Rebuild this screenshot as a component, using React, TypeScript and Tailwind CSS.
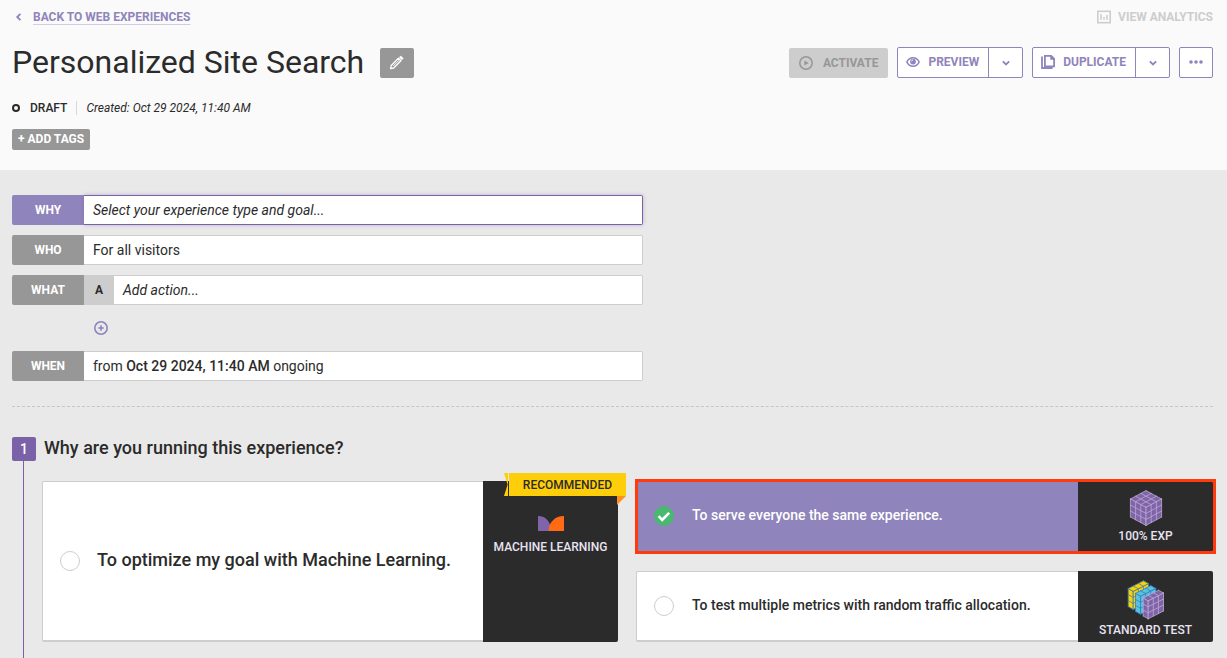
import type { ReactNode } from "react";

const linkText = "text-xs leading-4 font-bold";

function ChevronDown() {
  return (
    <svg className="size-2" viewBox="0 0 8 8" fill="none" stroke="currentColor" strokeWidth="1.8" aria-hidden="true">
      <path d="M0.8 2.4 4 5.5 7.2 2.4" />
    </svg>
  );
}

function Pencil() {
  return (
    <svg className="size-4" viewBox="0 0 16 16" fill="none" stroke="currentColor" strokeWidth="1.3" strokeLinejoin="round" aria-hidden="true">
      <path d="M1.6 13.6 2.2 10.5 9.4 3.3 11.9 5.8 4.7 13Z" />
      <path d="M4.2 11 10 5.2" strokeWidth="0.9" />
      <path d="M10.4 2.3 11.8 0.9 14.3 3.4 12.9 4.8Z" fill="currentColor" strokeWidth="0.6" />
    </svg>
  );
}

function Eye() {
  return (
    <svg className="h-4 w-[14px]" viewBox="0 0 14 16" fill="none" stroke="currentColor" strokeWidth="1.6" aria-hidden="true">
      <path d="M0.9 8C2.2 5 4.4 3.8 7 3.8S11.8 5 13.1 8C11.8 11 9.6 12.2 7 12.2S2.2 11 0.9 8Z" />
      <circle cx="7" cy="7.6" r="2.9" fill="currentColor" stroke="none" />
      <path d="M5.6 7.4A1.5 1.5 0 0 1 7 5.9" stroke="#fff" strokeWidth="0.9" />
    </svg>
  );
}

function Pages() {
  return (
    <svg className="size-[14px]" viewBox="0 0 14 14" fill="none" stroke="currentColor" aria-hidden="true">
      <path d="M3.9 0.9H10.2L13.1 3.8V11.4H3.9Z" strokeWidth="1.8" />
      <path d="M9.6 1V4.4H13V3.8L10.2 1Z" fill="currentColor" strokeWidth="0.6" />
      <path d="M1 1.6V13H11.6" strokeWidth="1.8" />
    </svg>
  );
}

function PlayCircle() {
  return (
    <svg className="size-[14px]" viewBox="0 0 14 14" aria-hidden="true">
      <circle cx="7" cy="7" r="6.2" fill="none" stroke="currentColor" strokeWidth="1.5" />
      <path d="M5.3 4.5V9.5L9.8 7Z" fill="currentColor" />
    </svg>
  );
}

function Analytics() {
  return (
    <svg className="size-[14px]" viewBox="0 0 14 14" fill="none" stroke="currentColor" aria-hidden="true">
      <rect x="0.8" y="1.3" width="12.4" height="11.4" strokeWidth="1.6" />
      <path d="M4 4V9.8M7 7V9.8M10 5V9.8" strokeWidth="1.5" />
    </svg>
  );
}

function SplitButton({ icon, label }: { icon: ReactNode; label: string }) {
  return (
    <div className="flex h-[31px] rounded-xs border border-[#8f84bb] bg-white text-[#8f84bb]">
      <button type="button" className={`flex items-center gap-2 border-r border-[#8f84bb] pr-[9px] pb-0.5 pl-2 ${linkText}`}>
        {icon}
        {label}
      </button>
      <button type="button" aria-label={`${label} options`} className="flex w-[33px] items-center justify-center">
        <ChevronDown />
      </button>
    </div>
  );
}

function SummaryRow({ name, active, slot, children }: { name: string; active?: boolean; slot?: string; children: ReactNode }) {
  return (
    <button type="button" className="flex h-[30px] w-full text-left">
      <span
        className={`flex w-18 items-center justify-center self-stretch rounded-l-xs text-xs font-bold text-white ${active ? "bg-[#8f84bb]" : "bg-[#979797]"}`}
      >
        {name}
      </span>
      {slot && <span className="flex w-[30px] items-center justify-center self-stretch bg-[#cdcdcd] text-xs font-bold">{slot}</span>}
      <span
        className={`flex flex-1 items-center self-stretch rounded-r-xs border border-l-0 bg-white px-[9px] text-sm ${active ? "border-[#7b62a8] shadow-[0_0_4px_#7b62a866]" : "border-[#cdcdcd]"}`}
      >
        <span>{children}</span>
      </span>
    </button>
  );
}

type Point = [number, number];

function Face({ origin, u, v, cols, rows, fill, line }: { origin: Point; u: Point; v: Point; cols: number; rows: number; fill: string; line: string }) {
  const at = (a: number, b: number) => `${origin[0] + u[0] * a + v[0] * b} ${origin[1] + u[1] * a + v[1] * b}`;
  let grid = "";
  for (let i = 0; i <= cols; i++) grid += `M${at(i, 0)}L${at(i, rows)}`;
  for (let j = 0; j <= rows; j++) grid += `M${at(0, j)}L${at(cols, j)}`;
  return (
    <>
      <path d={`M${at(0, 0)}L${at(cols, 0)}L${at(cols, rows)}L${at(0, rows)}Z`} fill={fill} />
      <path d={grid} stroke={line} strokeWidth="0.8" strokeLinecap="round" fill="none" />
    </>
  );
}

function Cube() {
  const tone = { fill: "#8064a9", line: "#b9a9d0" };
  return (
    <svg className="h-9 w-[34px]" viewBox="0 0 34 36" aria-hidden="true">
      <Face origin={[17, 0.6]} u={[5.2, 2.8]} v={[-5.2, 2.8]} cols={3} rows={3} {...tone} />
      <Face origin={[1.4, 9]} u={[5.2, 2.8]} v={[0, 6]} cols={3} rows={3} {...tone} />
      <Face origin={[17, 17.4]} u={[5.2, -2.8]} v={[0, 6]} cols={3} rows={3} {...tone} />
    </svg>
  );
}

function Slab({ x, y, fill, line }: { x: number; y: number; fill: string; line: string }) {
  return (
    <>
      <Face origin={[x, y]} u={[5, 2.8]} v={[0, 6]} cols={1} rows={3} fill={fill} line={line} />
      <Face origin={[x + 5, y + 2.8]} u={[5.1, -2.6]} v={[0, 6]} cols={3} rows={3} fill={fill} line={line} />
      <Face origin={[x, y]} u={[5.1, -2.6]} v={[5, 2.8]} cols={3} rows={1} fill={fill} line={line} />
    </>
  );
}

function SlicedCube() {
  return (
    <svg className="h-10 w-[38px]" viewBox="0 0 38 40" aria-hidden="true">
      <Slab x={1.2} y={8.6} fill="#ffce0a" line="#3c86a0" />
      <Slab x={8.5} y={13.4} fill="#5cc0dc" line="#2b83cb" />
      <Slab x={16.2} y={18} fill="#8064a9" line="#b9a9d0" />
    </svg>
  );
}

function MachineMark() {
  return (
    <svg className="h-[15px] w-[26px]" viewBox="0 0 26 15" aria-hidden="true">
      <path d="M0 0C8 0 13 6 13 15H0Z" fill="#8064a9" />
      <path d="M26 0V15H10.5C11 6 17 0 26 0Z" fill="#ff6b15" />
    </svg>
  );
}

function Ribbon() {
  return (
    <div className="absolute -top-2 -right-2 flex">
      <svg className="h-[23px] w-[5px]" viewBox="0 0 5 23" aria-hidden="true">
        <path d="M0 0H4V23H0L3.6 11.5Z" fill="#ffce0a" />
      </svg>
      <span className="flex h-[23px] items-center bg-[#ffce0a] px-[14px] text-xs font-medium text-[#2b2b2b]">RECOMMENDED</span>
      <svg className="absolute top-full right-0 size-[9px]" viewBox="0 0 9 9" aria-hidden="true">
        <path d="M0 0H9L0 9Z" fill="#ff9124" />
      </svg>
    </div>
  );
}

function Option({
  text,
  caption,
  art,
  checked,
  large,
}: {
  text: string;
  caption: string;
  art: ReactNode;
  checked?: boolean;
  large?: boolean;
}) {
  return (
    <label className={`relative flex rounded-xs ${large ? "row-span-2" : ""}`}>
      <span
        className={`flex flex-1 items-center rounded-l-xs border border-r-0 border-b-2 pl-[17px] ${checked ? "border-[#8f84bb] bg-[#8f84bb] text-white" : "border-[#cdcdcd] bg-white"}`}
      >
        <span className="relative flex size-5">
          <input
            type="radio"
            name="purpose"
            defaultChecked={checked}
            className="size-5 appearance-none rounded-full border border-[#cdcdcd] bg-white checked:border-[#49b971] checked:bg-[#49b971]"
          />
          {checked && (
            <svg className="absolute inset-0 size-5" viewBox="0 0 20 20" fill="none" stroke="#fff" strokeWidth="2.6" aria-hidden="true">
              <path d="M4.6 10.2 8.2 13.8 15.2 6.9" />
            </svg>
          )}
        </span>
        <span className={`pb-0.5 font-medium ${large ? "pl-[17px] text-lg" : "pl-[18px] text-sm"}`}>{text}</span>
      </span>
      <span
        className={`flex w-[135px] flex-col items-center rounded-r-xs bg-[#2b2b2b] text-xs leading-4 font-medium text-[#e9e4f2] ${large ? "gap-2 pt-[35px]" : "gap-0.5 pt-[9px]"}`}
      >
        {art}
        {caption}
      </span>
      {large && <Ribbon />}
      {checked && <span className="absolute -inset-y-[2px] -right-[3px] -left-px border-3 border-[#ff3a0c]" />}
    </label>
  );
}

export default function App() {
  return (
    <div className="flex min-h-screen flex-col bg-[#e9e9e9] font-['Roboto',sans-serif] text-[#2b2b2b]">
      <header className="bg-[#fafafa] pt-2 pr-[14px] pb-5 pl-3">
        <div className="flex h-[17px] items-center justify-between">
          <a href="#experiences" className={`flex items-center gap-[9px] pl-[3px] text-[#8f84bb] ${linkText}`}>
            <svg className="size-2" viewBox="0 0 8 8" fill="none" stroke="currentColor" strokeWidth="1.8" aria-hidden="true">
              <path d="M5.4 0.8 2.2 4 5.4 7.2" />
            </svg>
            <span className="pl-px underline decoration-[#d2cde4] decoration-1 underline-offset-3">BACK TO WEB EXPERIENCES</span>
          </a>
          <a href="#analytics" className={`flex items-center gap-[7px] text-[#cdcdcd] ${linkText}`}>
            <Analytics />
            VIEW ANALYTICS
          </a>
        </div>
        <div className="mt-4 flex items-start justify-between">
          <div className="flex items-center gap-4">
            <h1 className="text-[32px] leading-[43px]">Personalized Site Search</h1>
            <button type="button" aria-label="Edit name" className="flex h-[30px] w-[34px] items-center justify-center rounded-xs bg-[#979797] text-white">
              <Pencil />
            </button>
          </div>
          <div className="mt-1.5 flex gap-[9px]">
            <button type="button" disabled className={`mt-px flex h-[30px] items-center gap-[10px] rounded-xs bg-[#cdcdcd] px-[10px] text-[#979797] ${linkText}`}>
              <PlayCircle />
              ACTIVATE
            </button>
            <SplitButton icon={<Eye />} label="PREVIEW" />
            <SplitButton icon={<Pages />} label="DUPLICATE" />
            <button type="button" aria-label="More" className="flex h-[31px] w-[34px] items-center justify-center rounded-xs border border-[#8f84bb] bg-white pb-0.5 text-[#8f84bb]">
              <svg className="h-1 w-[14px]" viewBox="0 0 14 4" fill="currentColor" aria-hidden="true">
                <circle cx="2" cy="2" r="1.8" />
                <circle cx="7" cy="2" r="1.8" />
                <circle cx="12" cy="2" r="1.8" />
              </svg>
            </button>
          </div>
        </div>
        <div className="mt-4 flex items-center text-xs leading-4">
          <span className="size-2 rounded-full border-2 border-[#2b2b2b]" />
          <span className="pl-[10px] font-medium">DRAFT</span>
          <span className="mx-[9px] h-[14px] w-px bg-[#d8d8d8]" />
          <span className="italic">Created: Oct 29 2024, 11:40 AM</span>
        </div>
        <button type="button" className="mt-[13px] flex h-[21px] items-center rounded-xs bg-[#979797] px-1.5 pb-0.5 text-xs font-bold text-white">
          + ADD TAGS
        </button>
      </header>
      <main className="flex flex-1 flex-col pt-[25px] pr-[14px] pl-3">
        <div className="flex w-full max-w-[631px] flex-col gap-[10px]">
          <SummaryRow name="WHY" active>
            <i>Select your experience type and goal...</i>
          </SummaryRow>
          <SummaryRow name="WHO">For all visitors</SummaryRow>
          <SummaryRow name="WHAT" slot="A">
            <i>Add action...</i>
          </SummaryRow>
          <div className="flex h-[26px] items-center pl-[82px]">
            <button type="button" aria-label="Add variation" className="text-[#8f84bb]">
              <svg className="block size-[14px]" viewBox="0 0 14 14" fill="none" stroke="currentColor" strokeWidth="1.6" aria-hidden="true">
                <circle cx="7" cy="7" r="6.2" />
                <path d="M7 4.2V9.8M4.2 7H9.8" />
              </svg>
            </button>
          </div>
          <SummaryRow name="WHEN">
            from <b className="font-medium">Oct 29 2024, 11:40 AM</b> ongoing
          </SummaryRow>
        </div>
        <section className="mt-[25px] flex flex-1 flex-col border-t border-dashed border-[#c6c6c6] pt-[30px]">
          <div className="flex items-start gap-2">
            <span className="flex size-6 items-center justify-center rounded-xs bg-[#7b62a8] text-sm font-medium text-white">1</span>
            <h2 className="text-lg leading-[22px] font-medium">Why are you running this experience?</h2>
          </div>
          <div className="ml-[11px] flex-1 border-l border-[#7b62a8] pt-5 pb-4 pl-[18px]">
            <div className="grid auto-rows-[71px] grid-cols-[576fr_577fr] gap-x-[18px] gap-y-[19px]">
              <Option large text="To optimize my goal with Machine Learning." caption="MACHINE LEARNING" art={<MachineMark />} />
              <Option checked text="To serve everyone the same experience." caption="100% EXP" art={<Cube />} />
              <Option text="To test multiple metrics with random traffic allocation." caption="STANDARD TEST" art={<SlicedCube />} />
            </div>
          </div>
        </section>
      </main>
    </div>
  );
}
